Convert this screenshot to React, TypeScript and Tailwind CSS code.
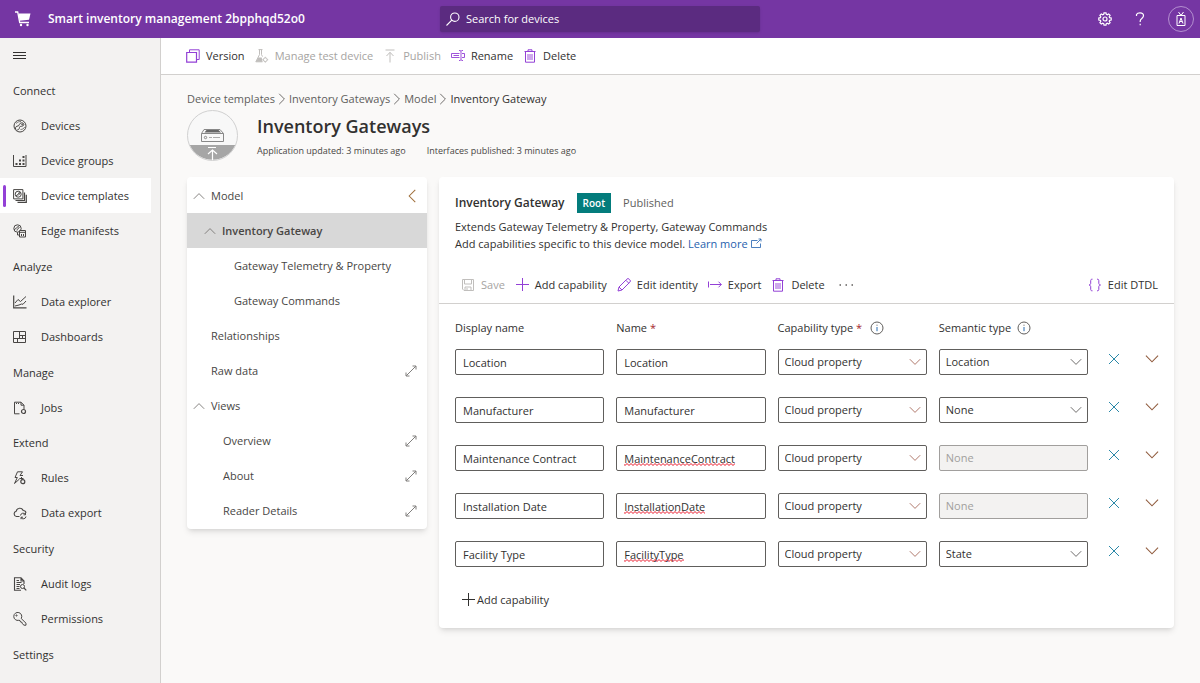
// App.tsx
import { useState } from 'react';
import type { ReactNode } from 'react';

type IconProps = { className?: string; children?: ReactNode; box?: string };

function Icon({ className = 'size-3.5', children, box = '0 0 14 14' }: IconProps) {
  return (
    <svg viewBox={box} className={`shrink-0 ${className}`} fill="none" stroke="currentColor" strokeWidth="1" aria-hidden="true">
      {children}
    </svg>
  );
}

const DevicesIcon = () => (
  <Icon>
    <circle cx="7" cy="7" r="6" />
    <path d="M2.500 10c-.3-2 1-3 2.500-3s1-3 3.500-3.200 3 2.200 1.500 3-3.500.2-3.500 1.700-1.500 2.800-3 2.500" />
    <path d="M3 4.500C4.500 3 6 2.500 8 2.500M7.500 10.500c2 0 3.500-1 4.200-2.500" strokeWidth=".7" />
    <circle cx="9.200" cy="5.300" r=".5" />
  </Icon>
);

const GroupsIcon = () => (
  <Icon>
    <path d="M.5 1v11.500h12.500V1" />
    <g fill="currentColor" stroke="none">
      <path d="M2.500 9h2v2h-2zM6 9h2v2H6zM9.500 9h2v2h-2zM6 5.500h2v2H6zM9.500 5.500h2v2h-2zM9.500 2h2v2h-2z" />
    </g>
  </Icon>
);

const TemplatesIcon = () => (
  <Icon>
    <path d="M.6.6h9.300v9.300H.6z" />
    <circle cx="5.200" cy="5.200" r="3" />
    <path d="M3.500 7c0-2 2-1 2-2.500s2-1 1.500 0-1.800 1-2 2" />
    <path d="M2.500 11.500h9v-8M4.500 13.300h8.800v-7.500" strokeWidth="1.200" />
  </Icon>
);

const ManifestsIcon = () => (
  <Icon>
    <circle cx="4.500" cy="4.500" r="3.700" />
    <path d="M1.500 6c0-2 2-1 2.500-2.500s2.500-1 2 .3S4 4.500 4 6.500" />
    <path d="M6.500 6.500h6v6.500h-6z" fill="#f3f2f1" />
    <path d="M6.500 8.300h6M8.500 10v2M10.500 10v2M5 8.500H4.500V11h2" />
  </Icon>
);

const ExplorerIcon = () => (
  <Icon>
    <path d="M.7.5v12.300h12.800" strokeWidth="1.200" />
    <path d="m2 8 3-3.500 2.500 2L13 1.500M2 11l4-1 2.500-1 1.500.3 3-3.300" />
  </Icon>
);

const DashboardsIcon = () => (
  <Icon>
    <path d="M.5 1.500h12v11H.5zM.5 8.500h12M6.500 1.500v7M6.500 5.500h6M9.500 5.500v3M4.500 8.500v4" />
  </Icon>
);

const JobsIcon = () => (
  <Icon>
    <path d="M6.500 12.800h-5V1.200H8l3 3v4M8 1.200v3h3" />
    <path d="M3 2.500h1M5 2.500h1" />
    <circle cx="10.500" cy="10.500" r="2" strokeWidth="1.200" />
  </Icon>
);

const RulesIcon = () => (
  <Icon>
    <path d="M4.500.8h5L7 4.500h3M4.500.8 2 6.500h2.300L1.500 12.500 6.500 8" />
    <path d="M6.500 7.500h4M8.500 6v2.500" />
    <circle cx="9.800" cy="10.700" r="2" strokeWidth="1.200" />
  </Icon>
);

const ExportIcon = () => (
  <Icon>
    <path d="M6.500 10.500h-3a2.700 2.700 0 0 1-.3-5.300 3.700 3.700 0 0 1 7-.7 2.800 2.800 0 0 1 2.800 2.300" strokeWidth="1.100" />
    <path d="M7.500 9.500a2.700 2.700 0 0 1 5-1M12.500 6.800v2h-2M13 10.500a2.700 2.700 0 0 1-5 1M8 13.200v-2h2" />
  </Icon>
);

const AuditIcon = () => (
  <Icon>
    <path d="M11 7V4L8 .8H1.500v12.400H8M8 .8V4h3" strokeWidth="1.100" />
    <path d="M3.500 5.500h5M3.500 7.500h3.500M3.500 9.500h3M3.500 11.500h3M3.500 3.500h2.500" />
    <circle cx="9.500" cy="9.500" r="2" />
    <path d="m11 11 2.300 2.300" strokeWidth="1.200" />
  </Icon>
);

const KeyIcon = () => (
  <Icon>
    <path d="M8.200 6.500A4 4 0 1 0 5.800 8.300l1.200.2.500 1.500 1.500.3.300 1.400 1.700 1.500h2v-2z" />
    <circle cx="3.500" cy="3.500" r=".6" />
  </Icon>
);

const VersionIcon = () => (
  <Icon>
    <path d="M3.500 3V.8h9.700v9.700h-2.500" />
    <path d="M.7 3.500h9.800v9.700H.7z" strokeWidth="1.200" />
  </Icon>
);

const FlaskIcon = () => (
  <Icon>
    <path d="M3.500.6h4M4.500.6v5L.8 12.800h6.700M6.500.6v5l1 2" />
    <path d="M3.200 8.500h3.500l.8 4.300H.9z" fill="currentColor" stroke="none" />
    <circle cx="10.300" cy="10.700" r="1.900" />
    <path d="M10.300 7.800v1M10.300 12.600v1M7.400 10.700h1M12.200 10.700h1" />
  </Icon>
);

const PublishIcon = () => (
  <Icon>
    <path d="M2.500 1h9M7 13.500V3.500M3.500 7 7 3.300 10.500 7" />
  </Icon>
);

const RenameIcon = () => (
  <Icon>
    <path d="M8.500 4.500h-8v4h8M11 4.500h2.500v4H11M2.500 6.500H8M8 1.500h1.300l.7.7.7-.7H12M8 11.500h1.300l.7-.7.7.7H12M10 2v9" strokeWidth=".9" />
  </Icon>
);

const TrashIcon = () => (
  <Icon>
    <path d="M1.500 2.500h11M5 2.500V.8h4v1.700M2.500 2.500v10.700h9V2.500" />
    <path d="M5 5v6M7 5v6M9 5v6" strokeWidth=".9" />
  </Icon>
);

const SaveIcon = () => (
  <Icon>
    <path d="M1.500 1.500h11v11H3l-1.500-1.500zM3.500 1.500V6h7V1.500M4 12.500V9h6v3.500M6 10v2.500" />
  </Icon>
);

const PlusIcon = () => (
  <Icon>
    <path d="M7.500 0v13M1 6.500h13" />
  </Icon>
);

const PencilIcon = () => (
  <Icon>
    <path d="m1 13 1-4 7.800-7.800a1.600 1.600 0 0 1 2.400 0l.6.6a1.600 1.600 0 0 1 0 2.400L5 12zM8.800 2.200l3 3M2 9l3 3" />
  </Icon>
);

const ArrowExportIcon = () => (
  <Icon>
    <path d="M.5 3.500v6M2 6.500h11.300M10.500 3.700l2.800 2.800-2.800 2.800" />
  </Icon>
);

const BracesIcon = () => (
  <Icon>
    <path d="M4.500 1.200c-1.500 0-1.800.4-1.800 1.500v2.500c0 1-.4 1.500-1.700 1.800 1.300.3 1.700.8 1.700 1.800v2.500c0 1.100.3 1.500 1.800 1.500M9 1.200c1.500 0 1.800.4 1.800 1.500v2.500c0 1 .4 1.500 1.700 1.800-1.300.3-1.700.8-1.700 1.800v2.500c0 1.100-.3 1.500-1.800 1.500" />
  </Icon>
);

const InfoIcon = () => (
  <Icon className="size-3.5 text-[#605e5c]">
    <circle cx="7" cy="7" r="6" />
    <path d="M7 6v4.200" className="text-[#2b6cb0]" />
    <path d="M7 3.700v1" />
  </Icon>
);

const ExpandIcon = () => (
  <Icon className="size-3 text-[#605e5c]" box="0 0 12 12">
    <path d="m1.500 10.500 9-9M7.500 1h3.500v3.500M1 7.500V11h3.500" strokeWidth=".8" />
  </Icon>
);

const Chevron = ({ className }: { className: string }) => (
  <Icon className={className} box="0 0 12 12">
    <path d="m.8 3.200 5.200 5.200 5.200-5.200" strokeWidth=".9" />
  </Icon>
);

const navGroups = [
  {
    title: 'Connect',
    items: [
      { label: 'Devices', icon: DevicesIcon },
      { label: 'Device groups', icon: GroupsIcon },
      { label: 'Device templates', icon: TemplatesIcon },
      { label: 'Edge manifests', icon: ManifestsIcon },
    ],
  },
  {
    title: 'Analyze',
    items: [
      { label: 'Data explorer', icon: ExplorerIcon },
      { label: 'Dashboards', icon: DashboardsIcon },
    ],
  },
  { title: 'Manage', items: [{ label: 'Jobs', icon: JobsIcon }] },
  {
    title: 'Extend',
    items: [
      { label: 'Rules', icon: RulesIcon },
      { label: 'Data export', icon: ExportIcon },
    ],
  },
  {
    title: 'Security',
    items: [
      { label: 'Audit logs', icon: AuditIcon },
      { label: 'Permissions', icon: KeyIcon },
    ],
  },
  { title: 'Settings', items: [] },
];

const commands = [
  { label: 'Version', icon: VersionIcon, disabled: false },
  { label: 'Manage test device', icon: FlaskIcon, disabled: true },
  { label: 'Publish', icon: PublishIcon, disabled: true },
  { label: 'Rename', icon: RenameIcon, disabled: false },
  { label: 'Delete', icon: TrashIcon, disabled: false },
];

const modelCommands = [
  { label: 'Save', icon: SaveIcon, disabled: true },
  { label: 'Add capability', icon: PlusIcon, disabled: false },
  { label: 'Edit identity', icon: PencilIcon, disabled: false },
  { label: 'Export', icon: ArrowExportIcon, disabled: false },
  { label: 'Delete', icon: TrashIcon, disabled: false },
];

const treeItems = [
  { label: 'Model', indent: 'pl-1.5', open: true },
  { label: 'Inventory Gateway', indent: 'pl-[17px]', open: true, selected: true },
  { label: 'Gateway Telemetry & Property', indent: 'pl-[47px]' },
  { label: 'Gateway Commands', indent: 'pl-[47px]' },
  { label: 'Relationships', indent: 'pl-6' },
  { label: 'Raw data', indent: 'pl-6', expand: true },
  { label: 'Views', indent: 'pl-1.5', open: true },
  { label: 'Overview', indent: 'pl-9', expand: true },
  { label: 'About', indent: 'pl-9', expand: true },
  { label: 'Reader Details', indent: 'pl-9', expand: true },
];

// typo is the width of the spelling mark under the name
const initialRows = [
  { display: 'Location', name: 'Location', semantic: 'Location' },
  { display: 'Manufacturer', name: 'Manufacturer', semantic: 'None' },
  { display: 'Maintenance Contract', name: 'MaintenanceContract', semantic: 'None', locked: true, typo: 'w-[111px]' },
  { display: 'Installation Date', name: 'InstallationDate', semantic: 'None', locked: true, typo: 'w-[81px]' },
  { display: 'Facility Type', name: 'FacilityType', semantic: 'State', typo: 'w-[60px]' },
];

function CommandButton({ label, icon: CommandIcon, disabled }: { label: string; icon: () => ReactNode; disabled: boolean }) {
  return (
    <button
      disabled={disabled}
      className={`flex items-center gap-1.5 whitespace-nowrap ${disabled ? 'text-[#a6a4a2]' : 'text-[#323130]'}`}
    >
      <span className={disabled ? 'text-[#c0bebc]' : 'text-[#9340d6]'}>
        <CommandIcon />
      </span>
      {label}
    </button>
  );
}

function Header() {
  return (
    <header className="grid h-[38px] grid-cols-[1fr_320px_1fr] items-center bg-[#7536a3] text-white">
      <a href="#home" className="flex items-center gap-[17px] whitespace-nowrap pl-[15px] text-xs font-semibold">
        <Icon className="size-4" box="0 0 16 16">
          <path d="M3.500 2.500h12L14 8.800 4.500 9.800z" fill="currentColor" stroke="none" />
          <path d="M0 1h2.700l2 10.500h9.300" strokeWidth="1.300" />
          <circle cx="6" cy="14" r="1.200" fill="currentColor" stroke="none" />
          <circle cx="12.500" cy="14" r="1.200" fill="currentColor" stroke="none" />
        </Icon>
        Smart inventory management 2bpphqd52o0
      </a>
      <label className="flex h-[26px] items-center gap-1.5 rounded-xs bg-[#5b2b80] px-1.5 shadow-sm">
        <Icon className="size-3.5">
          <circle cx="8.800" cy="5.200" r="4.200" strokeWidth="1.100" />
          <path d="m5.800 8.200-5.300 5.300" strokeWidth="1.100" />
        </Icon>
        <input
          aria-label="Search for devices"
          placeholder="Search for devices"
          className="w-full bg-transparent outline-none placeholder:text-white"
        />
      </label>
      <div className="flex items-center justify-end gap-[21px] pr-1.5">
        <button aria-label="Settings">
          <Icon className="size-3.5">
            <circle cx="7" cy="7" r="2" strokeWidth="1.200" />
            <path
              d="m6 .8-.3 1.600-1 .4-1.400-.9L1.900 3.300l.9 1.400-.4 1L.8 6v2l1.600.3.4 1-.9 1.400 1.400 1.400 1.400-.9 1 .4.3 1.600h2l.3-1.600 1-.4 1.400.9 1.400-1.400-.9-1.400.4-1 1.600-.3V6l-1.600-.3-.4-1 .9-1.400-1.400-1.400-1.400.9-1-.4L8 .8z"
              strokeWidth="1.200"
            />
          </Icon>
        </button>
        <button aria-label="Help">
          <Icon className="size-3.5">
            <path d="M3.500 4V2.500C4 1.500 5.500.8 7 .8c2 0 3.500 1.200 3.500 3 0 2.500-3.300 2.800-3.300 5.200v1M7.200 11.700v1.500" strokeWidth="1.200" />
          </Icon>
        </button>
        <button aria-label="Account" className="flex size-[26px] items-center justify-center rounded-full border border-[#b48fd0]">
          <Icon className="size-4" box="0 0 16 16">
            <path d="M4 4.500h8v10H4zM5.500 1 8 4.500 10.500 1M8 3v2" />
            <path d="m6 12.500 2-5.500 2 5.500M6.800 10.500h2.400" />
          </Icon>
        </button>
      </div>
    </header>
  );
}

function Sidebar() {
  return (
    <aside className="w-[161px] shrink-0 border-r border-[#d2d0ce] bg-[#f3f2f1]">
      <button aria-label="Collapse menu" className="flex h-[35px] items-center pl-[13px]">
        <Icon className="size-3.5">
          <path d="M0 3.500h13M0 6.500h13M0 9.500h13" shapeRendering="crispEdges" />
        </Icon>
      </button>
      <nav>
        {navGroups.map((group) => (
          <section key={group.title} className={group.items.length > 1 ? 'mb-px' : ''}>
            <h2 className="flex h-[35px] items-center pl-[13px] font-medium">{group.title}</h2>
            {group.items.map((item) => {
              const active = item.label === 'Device templates';
              return (
                <a
                  key={item.label}
                  href="#nav"
                  className={`flex h-[35px] items-center ${active ? 'mr-[9px] bg-white' : ''}`}
                >
                  <span className={`mx-[3px] h-[22px] w-[3px] rounded-full ${active ? 'bg-[#9340d6]' : ''}`} />
                  <span className="ml-1 mr-3.5 text-[#484644]">
                    <item.icon />
                  </span>
                  {item.label}
                </a>
              );
            })}
          </section>
        ))}
      </nav>
    </aside>
  );
}

function TemplateHeading() {
  return (
    <>
      <nav aria-label="Breadcrumb" className="flex h-4 items-center gap-px text-[#605e5c]">
        {['Device templates', 'Inventory Gateways', 'Model'].map((crumb) => (
          <span key={crumb} className="flex items-center gap-px">
            <a href="#crumb">{crumb}</a>
            <Chevron className="size-3 -rotate-90" />
          </span>
        ))}
        <span className="font-medium text-[#323130]">Inventory Gateway</span>
      </nav>
      <div className="mt-[3px] flex items-center gap-[19px]">
        <svg viewBox="0 0 51 51" className="size-[51px] shrink-0" fill="none" aria-hidden="true">
          <circle cx="25.500" cy="25.500" r="25" fill="#f8f8f8" />
          <path d="M2.700 35a25 25 0 0 0 45.600 0z" fill="#a6a6a6" />
          <circle cx="25.500" cy="25.500" r="25" stroke="#d0d0d0" />
          <path d="M14.500 23.500 17 19.500h16l3.500 4v8h-22zM14.500 23.500h22" stroke="#888" />
          <path d="m17.500 22.500 2-2.500h12l2.500 2.500z" fill="#666" />
          <circle cx="18.500" cy="27.500" r="1.200" stroke="#888" />
          <path d="M22 27.500h3M26 27.500h7" stroke="#aaa" />
          <path d="M21 37.500h8M25.500 50V39.500M21 44l4.500-4 4.500 4" stroke="#fff" strokeWidth="1.200" />
        </svg>
        <div className="pt-[3px]">
          <h1 className="text-lg font-semibold leading-6">Inventory Gateways</h1>
          <div className="mt-[3px] flex gap-[21px] text-[9px] leading-5 text-[#484644]">
            <span>Application updated: 3 minutes ago</span>
            <span>Interfaces published: 3 minutes ago</span>
          </div>
        </div>
      </div>
    </>
  );
}

function ModelTree() {
  return (
    <ul className="w-60 shrink-0 overflow-hidden rounded-sm bg-white py-px text-[#484644] shadow-md">
      {treeItems.map((item) => (
        <li key={item.label} className={`flex h-[35px] items-center justify-between pr-2 ${item.indent} ${item.selected ? 'bg-[#d8d8d8]' : ''}`}>
          <button className={`flex items-center gap-1.5 ${item.selected ? 'font-semibold' : ''}`}>
            {item.open && <Chevron className="size-3 rotate-180 text-[#797775]" />}
            {item.label}
          </button>
          {item.expand && (
            <button aria-label={`Open ${item.label}`} className="px-0.5">
              <ExpandIcon />
            </button>
          )}
          {item.label === 'Model' && (
            <button aria-label="Collapse panel">
              <Chevron className="size-3.5 rotate-90 text-[#a0703c]" />
            </button>
          )}
        </li>
      ))}
    </ul>
  );
}

function SelectBox({ label, value, options, disabled = false, arrow }: { label: string; value: string; options: string[]; disabled?: boolean; arrow: string }) {
  const [current, setCurrent] = useState(value);
  return (
    <div className="relative">
      <select
        aria-label={label}
        value={current}
        disabled={disabled}
        onChange={(e) => setCurrent(e.target.value)}
        className="block h-[26px] w-full appearance-none rounded-xs border border-[#605e5c] bg-white px-1.5 text-[#323130] disabled:border-[#a19f9d] disabled:bg-[#f3f2f1] disabled:text-[#a19f9d] disabled:opacity-100"
      >
        {options.map((option) => (
          <option key={option}>{option}</option>
        ))}
      </select>
      {!disabled && <Chevron className={`pointer-events-none absolute right-1.5 top-[7px] size-3 ${arrow}`} />}
    </div>
  );
}

function SpellingMark({ className }: { className: string }) {
  return (
    <svg className={`pointer-events-none absolute left-2 top-[18px] h-[3px] ${className}`} aria-hidden="true">
      <defs>
        <pattern id="wave" width="4" height="3" patternUnits="userSpaceOnUse">
          <path d="M-1 .5 1 2.500 3 .5 5 2.500" fill="none" stroke="#e81123" strokeWidth="1" />
        </pattern>
      </defs>
      <rect width="100%" height="3" fill="url(#wave)" />
    </svg>
  );
}

function CapabilityTable() {
  const [rows, setRows] = useState(initialRows);
  const update = (index: number, field: 'display' | 'name', value: string) =>
    setRows(rows.map((row, i) => (i === index ? { ...row, [field]: value, typo: field === 'name' ? undefined : row.typo } : row)));

  return (
    <table className="w-full table-fixed text-left">
      <colgroup>
        <col />
        <col />
        <col />
        <col />
        <col className="w-[38px]" />
        <col className="w-7" />
      </colgroup>
      <thead>
        <tr className="h-[45px]">
          <th className="pt-0.5 font-medium">Display name</th>
          <th className="pt-0.5 font-medium">
            Name <span className="text-[#a4262c]">*</span>
          </th>
          <th className="pt-0.5 font-medium">
            <span className="flex items-center gap-2">
              <span>
                Capability type <span className="text-[#a4262c]">*</span>
              </span>
              <InfoIcon />
            </span>
          </th>
          <th className="pt-0.5 font-medium">
            <span className="flex items-center gap-1.5">
              Semantic type
              <InfoIcon />
            </span>
          </th>
          <th />
          <th />
        </tr>
      </thead>
      <tbody>
        {rows.map((row, index) => (
          <tr key={index} className="h-12 align-top">
            {(['display', 'name'] as const).map((field) => (
              <td key={field} className="pr-3">
                <div className="relative">
                  <input
                    aria-label={field === 'name' ? 'Name' : 'Display name'}
                    value={row[field]}
                    spellCheck={false}
                    onChange={(e) => update(index, field, e.target.value)}
                    className="block h-[26px] w-full rounded-xs border border-[#605e5c] px-[7px]"
                  />
                  {field === 'name' && row.typo && <SpellingMark className={row.typo} />}
                </div>
              </td>
            ))}
            <td className="pr-3">
              <SelectBox
                label="Capability type"
                value="Cloud property"
                options={['Cloud property', 'Property', 'Telemetry', 'Command']}
                arrow="text-[#a86a5c]"
              />
            </td>
            <td className="pr-3">
              <SelectBox
                label="Semantic type"
                value={row.semantic}
                options={['None', 'Location', 'State']}
                disabled={row.locked}
                arrow="text-[#605e5c]"
              />
            </td>
            <td>
              <button
                aria-label={`Remove ${row.display}`}
                onClick={() => setRows(rows.filter((_, i) => i !== index))}
                className="flex h-5 w-7 items-center justify-center text-[#2b88a8]"
              >
                <Icon className="size-3" box="0 0 12 12">
                  <path d="m1 1 10 10M11 1 1 11" />
                </Icon>
              </button>
            </td>
            <td>
              <button aria-label={`Expand ${row.display}`} className="flex h-5 w-7 items-center justify-center">
                <Chevron className="size-3.5 text-[#8f5a3c]" />
              </button>
            </td>
          </tr>
        ))}
      </tbody>
    </table>
  );
}

function ModelPanel() {
  return (
    <section className="min-w-0 flex-1 rounded-sm bg-white pt-4 shadow-md">
      <div className="flex h-5 items-center gap-3 px-4">
        <h2 className="text-xs font-semibold">Inventory Gateway</h2>
        <span className="bg-[#037c7c] px-1.5 text-[10px] font-semibold leading-5 text-white">Root</span>
        <span className="text-[#605e5c]">Published</span>
      </div>
      <p className="mt-[5px] px-4 leading-[17px]">
        Extends Gateway Telemetry &amp; Property, Gateway Commands
        <br />
        Add capabilities specific to this device model.{' '}
        <a href="#learn" className="inline-flex items-center gap-0.5 text-[#1f5fae]">
          Learn more
          <Icon className="size-3" box="0 0 12 12">
            <path d="M7.500 2.500h-6v7h9V5.500M6.500 5.500l4.500-4.500M8.500 1H11v2.500" strokeWidth=".8" />
          </Icon>
        </a>
      </p>
      <div className="mt-3.5 flex h-[38px] items-center justify-between border-b border-[#d2d0ce] pl-[22px] pr-4">
        <div className="flex items-center gap-2.5">
          {modelCommands.map((command) => (
            <CommandButton key={command.label} {...command} />
          ))}
          <button aria-label="More commands" className="ml-1 text-[#605e5c]">
            <Icon>
              <path d="M.5 7H2M6.500 7H8M12.500 7H14" strokeWidth="1.500" />
            </Icon>
          </button>
        </div>
        <CommandButton label="Edit DTDL" icon={BracesIcon} disabled={false} />
      </div>
      <div className="pl-4 pr-2">
        <CapabilityTable />
      </div>
      <button className="mb-[18px] ml-[22px] mt-px flex h-5 items-center gap-0.5">
        <PlusIcon />
        Add capability
      </button>
    </section>
  );
}

export default function App() {
  return (
    <div className="flex min-h-screen flex-col bg-[#faf9f8] font-['Open_Sans',sans-serif] text-[11px] leading-4 text-[#323130]">
      <Header />
      <div className="flex flex-1">
        <Sidebar />
        <div className="min-w-0 flex-1">
          <div className="flex h-[37px] items-center gap-2.5 border-b border-[#d2d0ce] bg-white pl-[25px]">
            {commands.map((command) => (
              <CommandButton key={command.label} {...command} />
            ))}
          </div>
          <main className="px-[26px] pt-4">
            <TemplateHeading />
            <div className="mt-4 flex items-start gap-3">
              <ModelTree />
              <ModelPanel />
            </div>
          </main>
        </div>
      </div>
    </div>
  );
}
